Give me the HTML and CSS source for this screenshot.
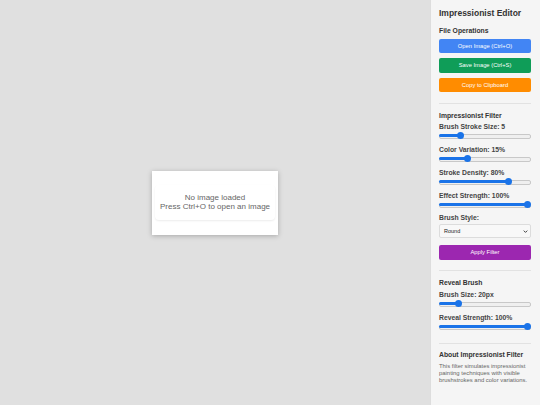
FILE: index.html
```html
<!DOCTYPE html>
<html>
<head>
<meta charset="utf-8">
<link rel="stylesheet" href="styles.css">
</head>
<body>
<div class="app">
  <main class="stage">
    <div class="card">
      <div class="placeholder">
        <div>No image loaded</div>
        <div>Press Ctrl+O to open an image</div>
      </div>
    </div>
  </main>
  <aside class="panel">
    <h1 class="title">Impressionist Editor</h1>
    <h2 class="head head-btns">File Operations</h2>
    <button class="btn blue">Open Image (Ctrl+O)</button>
    <button class="btn green">Save Image (Ctrl+S)</button>
    <button class="btn orange">Copy to Clipboard</button>
    <hr class="rule">
    <h2 class="head">Impressionist Filter</h2>
    <div class="ctl">
      <div class="lab">Brush Stroke Size: 5</div>
      <div class="range" style="--p:0.206"><div class="fill"></div><div class="thumb"></div></div>
    </div>
    <div class="ctl">
      <div class="lab">Color Variation: 15%</div>
      <div class="range" style="--p:0.297"><div class="fill"></div><div class="thumb"></div></div>
    </div>
    <div class="ctl">
      <div class="lab">Stroke Density: 80%</div>
      <div class="range" style="--p:0.78"><div class="fill"></div><div class="thumb"></div></div>
    </div>
    <div class="ctl">
      <div class="lab">Effect Strength: 100%</div>
      <div class="range" style="--p:1"><div class="fill"></div><div class="thumb"></div></div>
    </div>
    <div class="lab lab-select">Brush Style:</div>
    <div class="select"><span>Round</span><svg class="chev" viewBox="0 0 8 8" width="5" height="5"><path d="M1.2 2.6 L4 5.4 L6.8 2.6" fill="none" stroke="#333" stroke-width="1.5"/></svg></div>
    <button class="btn purple">Apply Filter</button>
    <hr class="rule">
    <h2 class="head head-reveal">Reveal Brush</h2>
    <div class="ctl">
      <div class="lab">Brush Size: 20px</div>
      <div class="range" style="--p:0.186"><div class="fill"></div><div class="thumb"></div></div>
    </div>
    <div class="ctl">
      <div class="lab">Reveal Strength: 100%</div>
      <div class="range" style="--p:1"><div class="fill"></div><div class="thumb"></div></div>
    </div>
    <hr class="rule rule-after-ctl">
    <h2 class="head head-about">About Impressionist Filter</h2>
    <p class="about">This filter simulates impressionist painting techniques with visible brushstrokes and color variations.</p>
  </aside>
</div>
</body>
</html>
```
FILE: styles.css
```css
* { box-sizing: border-box; }
html, body { margin: 0; padding: 0; }
body {
  font-family: "Liberation Sans", Arial, sans-serif;
  width: 540px;
  height: 405px;
  overflow: hidden;
}
.app {
  display: flex;
  width: 540px;
  height: 405px;
}
.stage {
  flex: 1;
  background: #e0e0e0;
  display: flex;
  align-items: center;
  justify-content: center;
}
.card {
  width: 126px;
  height: 64px;
  background: #fff;
  box-shadow: 0 1px 5px rgba(0,0,0,0.25);
  padding: 14px 3px 15px;
}
.placeholder {
  height: 35px;
  border-radius: 4px;
  box-shadow: 0 1px 2px rgba(0,0,0,0.08);
  display: flex;
  flex-direction: column;
  align-items: center;
  justify-content: center;
  font-size: 8px;
  line-height: 9px;
  color: #666;
}
.panel {
  width: 110px;
  background: #f5f5f5;
  border-left: 1px solid #ddd;
  padding: 7.5px 9px 0 8px;
  display: flex;
  flex-direction: column;
}
.title {
  margin: 0 0 7px;
  font-size: 8.5px;
  line-height: 11px;
  font-weight: bold;
  color: #333;
  white-space: nowrap;
}
.head {
  margin: 0 0 2.5px;
  font-size: 6.8px;
  line-height: 9px;
  font-weight: bold;
  color: #333;
  white-space: nowrap;
}
.head-btns { margin-bottom: 4px; }
.head-reveal { margin-bottom: 3px; }
.head-about { margin-bottom: 4.5px; }
.btn {
  display: block;
  width: 100%;
  height: 14.5px;
  border: none;
  border-radius: 2px;
  color: #fff;
  font-family: "Liberation Sans", Arial, sans-serif;
  font-size: 5.8px;
  padding: 0;
  margin: 0 0 5px;
  flex: none;
}
.orange { margin-bottom: 0; }
.blue { background: #4285f4; }
.green { background: #0f9d58; }
.orange { background: #ff8c00; }
.purple { background: #9c27b0; margin: 6.4px 0 0; height: 15px; }
.rule {
  border: none;
  border-top: 1px solid #e2e2e2;
  margin: 10.5px 0 7px;
  height: 0;
  flex: none;
}
.rule-after-ctl { margin-top: 6.8px; margin-bottom: 6px; }
.ctl { margin-bottom: 6px; }
.lab {
  font-size: 6.8px;
  line-height: 9px;
  font-weight: bold;
  color: #444;
  margin-bottom: 1px;
  white-space: nowrap;
}
.lab-select { margin-top: -1px; margin-bottom: 2px; }
.range {
  position: relative;
  height: 7px;
}
.range::before {
  content: "";
  position: absolute;
  left: 0; right: 0; top: 2px;
  height: 3px;
  border-radius: 2px;
  background: #efefef;
  border: 0.5px solid #c8c8c8;
}
.fill {
  position: absolute;
  left: 0; top: 2px;
  height: 3px;
  width: calc(3.5px + var(--p) * (100% - 7px));
  border-radius: 2px;
  background: #1a73e8;
}
.thumb {
  position: absolute;
  top: 0;
  left: calc(var(--p) * (100% - 7px));
  width: 7px;
  height: 7px;
  border-radius: 50%;
  background: #1a73e8;
}
.select {
  height: 14.3px;
  flex: none;
  background: #f8f8f8;
  border: 1px solid #dcdcdc;
  border-radius: 2px;
  display: flex;
  align-items: center;
  justify-content: space-between;
  padding: 0 2px 0 4px;
  font-size: 5.5px;
  color: #222;
}
.chev { display: block; }
.about {
  margin: 0;
  font-size: 5.9px;
  line-height: 7px;
  color: #666;
}
```
